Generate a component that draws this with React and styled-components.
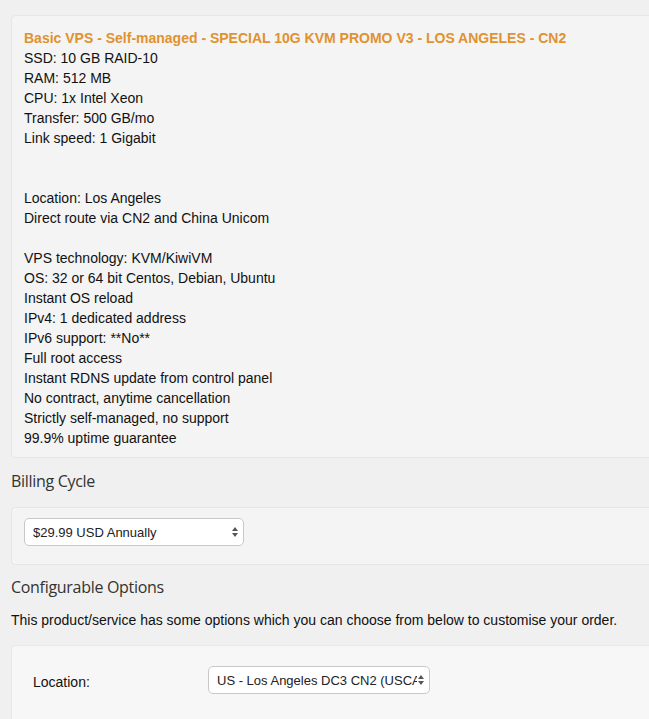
import React from "react";
import styled, { createGlobalStyle } from "styled-components";

const Global = createGlobalStyle`
  html, body { margin: 0; padding: 0; background: #f0f0f0; overflow: hidden; }
  body { font-family: "Liberation Sans", Arial, sans-serif; color: #111; }
`;

const Page = styled.div`
  width: 700px;
  padding: 15px 0 0 11px;
  box-sizing: border-box;
`;

const Panel = styled.div`
  background: ${(p) => p.$bg || "#f4f4f4"};
  border: 1px solid ${(p) => p.$border || "#e6e6e6"};
  border-radius: 4px;
  padding: ${(p) => p.$pad};
  margin-bottom: ${(p) => p.$mb || "0"};
`;

const Title = styled.div`
  color: #e0922e;
  font-weight: bold;
  font-size: 14px;
  line-height: 20px;
`;

const Line = styled.div`
  font-size: 14px;
  line-height: 20px;
  min-height: 20px;
`;

const Heading = styled.h3`
  margin: 0;
  font-family: "Open Sans", "Liberation Sans", sans-serif;
  font-weight: 400;
  font-size: 16px;
  line-height: 22px;
  color: #333;
  letter-spacing: -0.3px;
`;

const Para = styled.p`
  margin: 0;
  font-size: 14px;
  line-height: 20px;
`;

const SelectBox = styled.div`
  width: ${(p) => p.$w}px;
  height: 28px;
  box-sizing: border-box;
  background: #fff;
  border: 1px solid #c8c8c8;
  border-radius: 5px;
  display: flex;
  align-items: center;
  padding: 0 4px 0 8px;
  font-size: 13px;
  color: #222;
  overflow: hidden;
  white-space: nowrap;
`;

const SelectText = styled.span`
  flex: 1;
  overflow: hidden;
  text-overflow: clip;
`;

const Row = styled.div`
  display: flex;
  align-items: center;
`;

const Label = styled.div`
  width: 175px;
  font-size: 14px;
  padding-top: 4px;
`;

const Arrows = () => (
  <svg width="8" height="12" viewBox="0 0 8 12">
    <path d="M4 1 L7 5 L1 5 Z" fill="#555" />
    <path d="M4 11 L7 7 L1 7 Z" fill="#555" />
  </svg>
);

const Select = ({ w, children }) => (
  <SelectBox $w={w}>
    <SelectText>{children}</SelectText>
    <Arrows />
  </SelectBox>
);

const lines = [
  "SSD: 10 GB RAID-10",
  "RAM: 512 MB",
  "CPU: 1x Intel Xeon",
  "Transfer: 500 GB/mo",
  "Link speed: 1 Gigabit",
  "",
  "",
  "Location: Los Angeles",
  "Direct route via CN2 and China Unicom",
  "",
  "VPS technology: KVM/KiwiVM",
  "OS: 32 or 64 bit Centos, Debian, Ubuntu",
  "Instant OS reload",
  "IPv4: 1 dedicated address",
  "IPv6 support: **No**",
  "Full root access",
  "Instant RDNS update from control panel",
  "No contract, anytime cancellation",
  "Strictly self-managed, no support",
  "99.9% uptime guarantee",
];

const Section = styled.div`
  margin-bottom: ${(p) => p.$mb || "0"};
`;

export default function App() {
  return (
    <>
      <Global />
      <Page>
        <Panel $pad="12px 12px 9px 12px" $mb="12px">
          <Title>Basic VPS - Self-managed - SPECIAL 10G KVM PROMO V3 - LOS ANGELES - CN2</Title>
          {lines.map((l, i) => (
            <Line key={i}>{l}</Line>
          ))}
        </Panel>
        <Section $mb="15px">
          <Heading>Billing Cycle</Heading>
        </Section>
        <Panel $pad="10px 12px 18px 12px" $mb="11px">
          <Select w={220}>$29.99 USD Annually</Select>
        </Panel>
        <Section $mb="12px">
          <Heading>Configurable Options</Heading>
        </Section>
        <Section $mb="15px">
          <Para>This product/service has some options which you can choose from below to customise your order.</Para>
        </Section>
        <Panel $pad="20px 21px 40px 21px" $bg="#f7f7f7" $border="#e8e8e8">
          <Row>
            <Label>Location:</Label>
            <Select w={222}>US - Los Angeles DC3 CN2 (USCA_3)</Select>
          </Row>
        </Panel>
      </Page>
    </>
  );
}
